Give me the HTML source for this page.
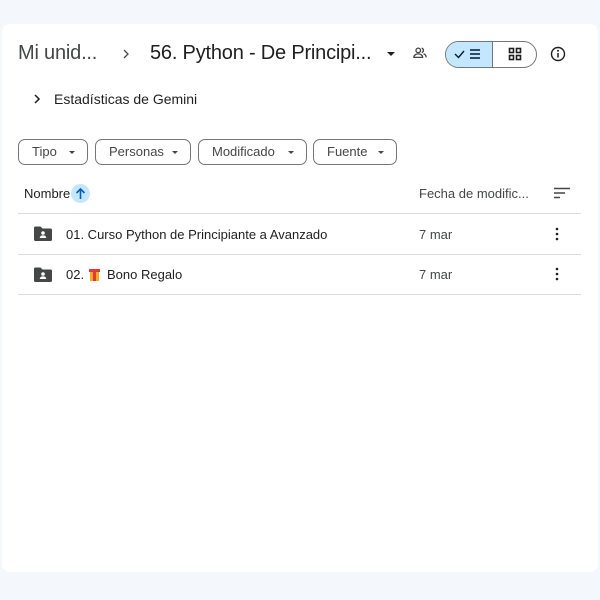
<!DOCTYPE html>
<html><head><style>
body{margin:0;width:600px;height:600px;background:#f4f7fb;font-family:"Liberation Sans",sans-serif;position:relative;overflow:hidden;color:#1f1f1f}
.card{position:absolute;left:2px;top:24px;width:596px;height:548px;background:#fff;border-radius:8px}
.a{position:absolute;white-space:nowrap}
.chip{position:absolute;top:139px;height:26px;border:1px solid #747775;border-radius:7px;box-sizing:border-box;font-size:13px;color:#444746;line-height:24px;padding-left:13px}
.chip:after{content:"";position:absolute;right:12px;top:11px;border-left:3.5px solid transparent;border-right:3.5px solid transparent;border-top:3.5px solid #444746}
.line{position:absolute;left:18px;width:563px;height:1px;background:#dadce0}
</style></head><body>
<div class="card"></div>
<div class="a" style="left:18px;top:42px;font-size:20px;color:#444746;letter-spacing:-0.2px">Mi unid...</div>
<svg class="a" style="left:121px;top:48px" width="10" height="12"><path d="M3 2l4 4-4 4" stroke="#444746" stroke-width="1.3" fill="none"/></svg>
<div class="a" style="left:150px;top:42px;font-size:20px;color:#1f1f1f;letter-spacing:-0.2px">56. Python - De Principi...</div>
<div class="a" style="left:387px;top:52px;border-left:4px solid transparent;border-right:4px solid transparent;border-top:4px solid #1f1f1f"></div>
<svg class="a" style="left:412px;top:46px" width="16" height="14" viewBox="0 0 18 16"><circle cx="7" cy="5" r="2.6" stroke="#444746" stroke-width="1.5" fill="none"/><path d="M2 13c0-3 3-4 5-4s5 1 5 4z" stroke="#444746" stroke-width="1.5" fill="none"/><path d="M11 2.5a2.6 2.6 0 010 5M13 9c2 .5 3 1.5 3 4" stroke="#444746" stroke-width="1.5" fill="none"/></svg>
<div class="a" style="left:445px;top:41px;width:92px;height:27px;border:1px solid #747775;border-radius:14px;box-sizing:border-box;overflow:hidden">
<div style="position:absolute;left:0;top:0;width:46px;height:27px;background:#c2e7ff;border-right:1px solid #747775"></div></div>
<svg class="a" style="left:453px;top:47px" width="32" height="14"><path d="M2 7l3.5 3.5L11 4" stroke="#001d35" stroke-width="1.4" fill="none"/><path d="M17 3h10M17 7h10M17 11h10" stroke="#001d35" stroke-width="1.6"/></svg>
<svg class="a" style="left:508px;top:47px" width="14" height="14"><g fill="none" stroke="#1f1f1f" stroke-width="1.6"><rect x="1.5" y="1.5" width="4" height="4"/><rect x="8.5" y="1.5" width="4" height="4"/><rect x="1.5" y="8.5" width="4" height="4"/><rect x="8.5" y="8.5" width="4" height="4"/></g></svg>
<svg class="a" style="left:550px;top:46px" width="16" height="16"><circle cx="8" cy="8" r="6.5" stroke="#1f1f1f" stroke-width="1.4" fill="none"/><path d="M8 7v4.5" stroke="#1f1f1f" stroke-width="1.5"/><circle cx="8" cy="4.8" r="1" fill="#1f1f1f"/></svg>
<svg class="a" style="left:33px;top:93px" width="8" height="12"><path d="M2 2l4 4-4 4" stroke="#1f1f1f" stroke-width="1.5" fill="none"/></svg>
<div class="a" style="left:54px;top:91px;font-size:14px">Estadísticas de Gemini</div>
<div class="chip" style="left:18px;width:70px">Tipo</div>
<div class="chip" style="left:95px;width:96px">Personas</div>
<div class="chip" style="left:198px;width:109px">Modificado</div>
<div class="chip" style="left:313px;width:84px">Fuente</div>
<div class="a" style="left:24px;top:186px;font-size:13px">Nombre</div>
<div class="a" style="left:71px;top:184px;width:19px;height:19px;border-radius:50%;background:#c2e7ff"></div>
<svg class="a" style="left:74px;top:187px" width="13" height="13"><path d="M6.5 12V2M2.5 6L6.5 2l4 4" stroke="#0b57d0" stroke-width="1.6" fill="none"/></svg>
<div class="a" style="left:419px;top:186px;font-size:13px;color:#444746">Fecha de modific...</div>
<svg class="a" style="left:553px;top:187px" width="18" height="12"><path d="M1 1.5h16M1 6h11M1 10.5h6" stroke="#444746" stroke-width="1.6"/></svg>
<div class="line" style="top:213px"></div>
<div class="line" style="top:254px"></div>
<div class="line" style="top:294px"></div>
<svg class="a" style="left:34px;top:226px" width="18" height="15"><path d="M0 2a1.5 1.5 0 011.5-1.5h5l2 2h8A1.5 1.5 0 0118 4v9.5a1.5 1.5 0 01-1.5 1.5h-15A1.5 1.5 0 010 13.5z" fill="#444746"/><circle cx="9" cy="7" r="1.8" fill="#fff"/><path d="M5.8 12c0-2 1.6-2.6 3.2-2.6s3.2.6 3.2 2.6z" fill="#fff"/></svg>
<svg class="a" style="left:34px;top:267px" width="18" height="15"><path d="M0 2a1.5 1.5 0 011.5-1.5h5l2 2h8A1.5 1.5 0 0118 4v9.5a1.5 1.5 0 01-1.5 1.5h-15A1.5 1.5 0 010 13.5z" fill="#444746"/><circle cx="9" cy="7" r="1.8" fill="#fff"/><path d="M5.8 12c0-2 1.6-2.6 3.2-2.6s3.2.6 3.2 2.6z" fill="#fff"/></svg>
<div class="a" style="left:66px;top:227px;font-size:13px">01. Curso Python de Principiante a Avanzado</div>
<div class="a" style="left:66px;top:267px;font-size:13px">02.</div>
<svg class="a" style="left:89px;top:268px" width="11" height="13"><rect x="0" y="1" width="11" height="3" fill="#e53935"/><rect x="1" y="4" width="9" height="9" fill="#f9a825"/><rect x="4" y="1" width="3" height="12" fill="#e53935"/></svg>
<div class="a" style="left:107px;top:267px;font-size:13px">Bono Regalo</div>
<div class="a" style="left:419px;top:227px;font-size:13px;color:#444746">7 mar</div>
<div class="a" style="left:419px;top:267px;font-size:13px;color:#444746">7 mar</div>
<svg class="a" style="left:555px;top:227px" width="4" height="14"><circle cx="2" cy="2" r="1.3" fill="#1f1f1f"/><circle cx="2" cy="7" r="1.3" fill="#1f1f1f"/><circle cx="2" cy="12" r="1.3" fill="#1f1f1f"/></svg>
<svg class="a" style="left:555px;top:267px" width="4" height="14"><circle cx="2" cy="2" r="1.3" fill="#1f1f1f"/><circle cx="2" cy="7" r="1.3" fill="#1f1f1f"/><circle cx="2" cy="12" r="1.3" fill="#1f1f1f"/></svg>
</body></html>
